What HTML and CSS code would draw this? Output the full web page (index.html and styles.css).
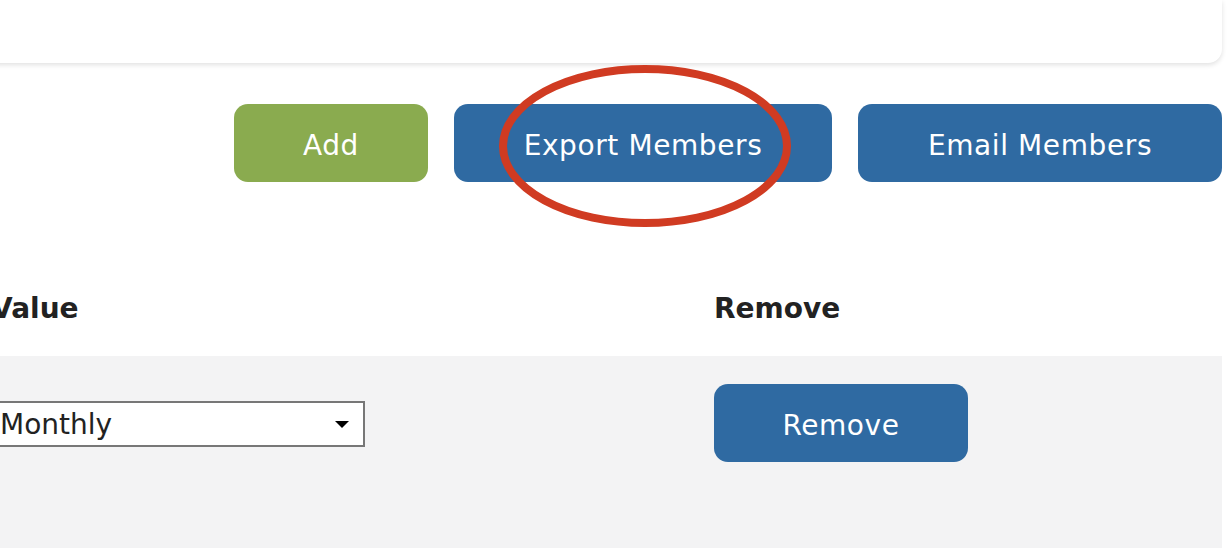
FILE: index.html
```html
<!DOCTYPE html>
<html lang="en">
<head>
    <meta charset="UTF-8">
    <meta name="viewport" content="width=device-width, initial-scale=1.0">
    <title>Members</title>
    <link rel="stylesheet" href="styles.css">
</head>
<body>
    <div class="page">
        <div class="card"></div>

        <div class="actions">
            <button class="btn btn-green btn-add">Add</button>
            <button class="btn btn-blue btn-export">Export Members</button>
            <button class="btn btn-blue btn-email">Email Members</button>
        </div>

        <div class="table">
            <div class="row head">
                <div class="cell first">Value</div>
                <div class="cell">Remove</div>
            </div>
            <div class="row body">
                <div class="cell first">
                    <div class="select-wrap">
                        <select class="select">
                            <option>Monthly</option>
                            <option>Yearly</option>
                        </select>
                    </div>
                </div>
                <div class="cell">
                    <button class="btn btn-blue btn-remove">Remove</button>
                </div>
            </div>
        </div>

        <!-- highlight drawn over the export button -->
        <svg class="ring" width="310" height="180" viewBox="0 0 310 180">
            <ellipse cx="155" cy="90" rx="142" ry="77" fill="none" stroke="#d03b22" stroke-width="8"/>
        </svg>
    </div>
</body>
</html>
```

FILE: styles.css
```css
body {
    margin: 0;
    padding: 0;
    background: #fff;
    font-family: "DejaVu Sans", sans-serif;
    color: #222;
    overflow: hidden;
}

.page {
    position: relative;
    width: 1252px;
    margin-left: -30px;
}

.card {
    height: 63px;
    background: #fff;
    border-radius: 0 0 14px 14px;
    box-shadow: 0 2px 5px rgba(0, 0, 0, 0.12);
}

.actions {
    display: flex;
    justify-content: flex-end;
    gap: 26px;
    margin-top: 41px;
}

.btn {
    height: 78px;
    padding: 4px 0 0;
    border: none;
    border-radius: 14px;
    color: #fff;
    font-family: inherit;
    font-size: 28px;
    letter-spacing: 0.6px;
    cursor: pointer;
}

.btn-green {
    background: #8aab4f;
}

.btn-blue {
    background: #2f6aa2;
}

.btn-add {
    width: 194px;
}

.btn-export {
    width: 378px;
}

.btn-email {
    width: 364px;
}

.btn-remove {
    width: 254px;
}

.table {
    margin-top: 78px;
}

.row {
    display: grid;
    grid-template-columns: 744px 1fr;
    align-items: center;
}

.row.head {
    height: 96px;
    font-size: 28px;
    font-weight: bold;
}

.row.body {
    background: #f3f3f4;
    padding: 28px 0 100px;
}

.cell.first {
    padding-left: 21px;
}

.row.body .cell.first {
    padding-left: 18px;
}

.select-wrap {
    position: relative;
    width: 377px;
}

.select {
    appearance: none;
    -webkit-appearance: none;
    width: 377px;
    height: 46px;
    border: 2px solid #777;
    border-radius: 0;
    background: #fff;
    color: #222;
    font-family: inherit;
    font-size: 28px;
    padding: 2px 0 0 10px;
    margin-top: 1px;
}

.select-wrap::after {
    content: "";
    position: absolute;
    right: 16px;
    top: 21px;
    border-left: 7px solid transparent;
    border-right: 7px solid transparent;
    border-top: 7px solid #000;
    pointer-events: none;
}

.ring {
    position: absolute;
    left: 520px;
    top: 56px;
}
```
